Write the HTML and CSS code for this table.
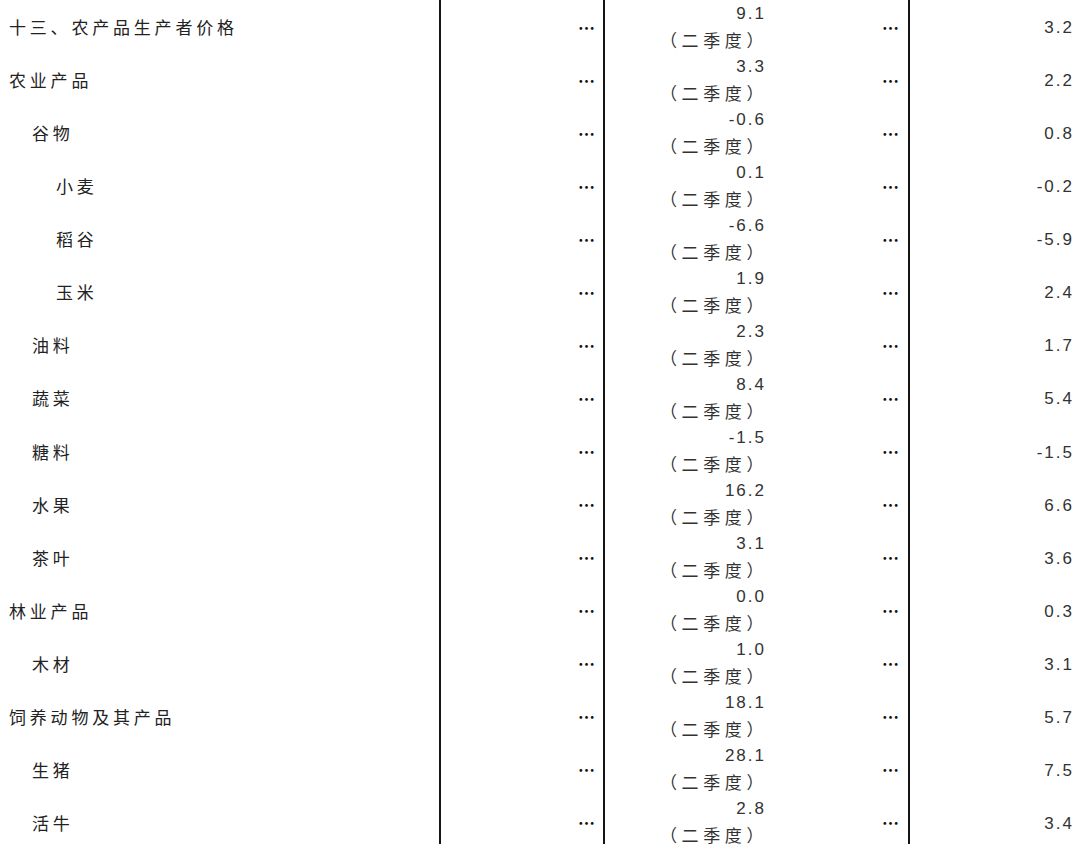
FILE: index.html
```html
<!DOCTYPE html>
<html lang="zh-CN">
<head>
<meta charset="utf-8">
<title>农产品生产者价格</title>
<link rel="stylesheet" href="styles.css">
</head>
<body>
<div class="table">
  <div class="row"><div class="label l0">十三、农产品生产者价格</div><div class="c2"><span class="dots">⋯</span></div><div class="c3"><div class="val"><span class="num">9.1</span><span class="q">（二季度）</span></div><span class="dots">⋯</span></div><div class="c4"><span class="num">3.2</span></div></div>
  <div class="row"><div class="label l0">农业产品</div><div class="c2"><span class="dots">⋯</span></div><div class="c3"><div class="val"><span class="num">3.3</span><span class="q">（二季度）</span></div><span class="dots">⋯</span></div><div class="c4"><span class="num">2.2</span></div></div>
  <div class="row"><div class="label l1">谷物</div><div class="c2"><span class="dots">⋯</span></div><div class="c3"><div class="val"><span class="num">-0.6</span><span class="q">（二季度）</span></div><span class="dots">⋯</span></div><div class="c4"><span class="num">0.8</span></div></div>
  <div class="row"><div class="label l2">小麦</div><div class="c2"><span class="dots">⋯</span></div><div class="c3"><div class="val"><span class="num">0.1</span><span class="q">（二季度）</span></div><span class="dots">⋯</span></div><div class="c4"><span class="num">-0.2</span></div></div>
  <div class="row"><div class="label l2">稻谷</div><div class="c2"><span class="dots">⋯</span></div><div class="c3"><div class="val"><span class="num">-6.6</span><span class="q">（二季度）</span></div><span class="dots">⋯</span></div><div class="c4"><span class="num">-5.9</span></div></div>
  <div class="row"><div class="label l2">玉米</div><div class="c2"><span class="dots">⋯</span></div><div class="c3"><div class="val"><span class="num">1.9</span><span class="q">（二季度）</span></div><span class="dots">⋯</span></div><div class="c4"><span class="num">2.4</span></div></div>
  <div class="row"><div class="label l1">油料</div><div class="c2"><span class="dots">⋯</span></div><div class="c3"><div class="val"><span class="num">2.3</span><span class="q">（二季度）</span></div><span class="dots">⋯</span></div><div class="c4"><span class="num">1.7</span></div></div>
  <div class="row"><div class="label l1">蔬菜</div><div class="c2"><span class="dots">⋯</span></div><div class="c3"><div class="val"><span class="num">8.4</span><span class="q">（二季度）</span></div><span class="dots">⋯</span></div><div class="c4"><span class="num">5.4</span></div></div>
  <div class="row"><div class="label l1">糖料</div><div class="c2"><span class="dots">⋯</span></div><div class="c3"><div class="val"><span class="num">-1.5</span><span class="q">（二季度）</span></div><span class="dots">⋯</span></div><div class="c4"><span class="num">-1.5</span></div></div>
  <div class="row"><div class="label l1">水果</div><div class="c2"><span class="dots">⋯</span></div><div class="c3"><div class="val"><span class="num">16.2</span><span class="q">（二季度）</span></div><span class="dots">⋯</span></div><div class="c4"><span class="num">6.6</span></div></div>
  <div class="row"><div class="label l1">茶叶</div><div class="c2"><span class="dots">⋯</span></div><div class="c3"><div class="val"><span class="num">3.1</span><span class="q">（二季度）</span></div><span class="dots">⋯</span></div><div class="c4"><span class="num">3.6</span></div></div>
  <div class="row"><div class="label l0">林业产品</div><div class="c2"><span class="dots">⋯</span></div><div class="c3"><div class="val"><span class="num">0.0</span><span class="q">（二季度）</span></div><span class="dots">⋯</span></div><div class="c4"><span class="num">0.3</span></div></div>
  <div class="row"><div class="label l1">木材</div><div class="c2"><span class="dots">⋯</span></div><div class="c3"><div class="val"><span class="num">1.0</span><span class="q">（二季度）</span></div><span class="dots">⋯</span></div><div class="c4"><span class="num">3.1</span></div></div>
  <div class="row"><div class="label l0">饲养动物及其产品</div><div class="c2"><span class="dots">⋯</span></div><div class="c3"><div class="val"><span class="num">18.1</span><span class="q">（二季度）</span></div><span class="dots">⋯</span></div><div class="c4"><span class="num">5.7</span></div></div>
  <div class="row"><div class="label l1">生猪</div><div class="c2"><span class="dots">⋯</span></div><div class="c3"><div class="val"><span class="num">28.1</span><span class="q">（二季度）</span></div><span class="dots">⋯</span></div><div class="c4"><span class="num">7.5</span></div></div>
  <div class="row"><div class="label l1">活牛</div><div class="c2"><span class="dots">⋯</span></div><div class="c3"><div class="val"><span class="num">2.8</span><span class="q">（二季度）</span></div><span class="dots">⋯</span></div><div class="c4"><span class="num">3.4</span></div></div>
</div>
</body>
</html>
```

FILE: styles.css
```css
html, body {
  margin: 0;
  padding: 0;
  background: #ffffff;
}

body {
  width: 1080px;
  height: 844px;
  overflow: hidden;
  font-family: "Noto Sans CJK SC", "Liberation Sans", sans-serif;
  color: #222;
}

.table {
  display: flex;
  flex-direction: column;
}

.row {
  display: grid;
  grid-template-columns: 439px 164px 305px 1fr;
  height: 53.07px;
}

.row > div {
  display: flex;
  align-items: center;
}

.label {
  font-size: 17px;
  font-weight: 400;
  letter-spacing: 3.8px;
  color: #222;
  white-space: nowrap;
}

.l0 { padding-left: 9px; }
.l1 { padding-left: 32px; }
.l2 { padding-left: 56px; }

.c2, .c3, .c4 {
  border-left: 2px solid #151515;
}

.c2 {
  justify-content: flex-end;
  padding-right: 8px;
}

.c3 {
  justify-content: space-between;
  padding-right: 9px;
}

.val {
  width: 161px;
  display: flex;
  flex-direction: column;
  align-items: flex-end;
}

.val .num {
  line-height: 26px;
}

.q {
  font-size: 17px;
  font-weight: 400;
  letter-spacing: 4.6px;
  line-height: 26px;
  color: #333;
  margin-right: -2px;
}

.c4 {
  justify-content: flex-end;
  padding-right: 6px;
  padding-top: 3px;
}

.num {
  font-family: "Liberation Sans", "DejaVu Sans", sans-serif;
  font-size: 17px;
  letter-spacing: 2px;
  color: #333;
}

.dots {
  font-family: "Noto Sans CJK SC", sans-serif;
  font-size: 17px;
  font-weight: 700;
  line-height: 20px;
  color: #111;
  letter-spacing: 0;
  padding-top: 2px;
}
```
